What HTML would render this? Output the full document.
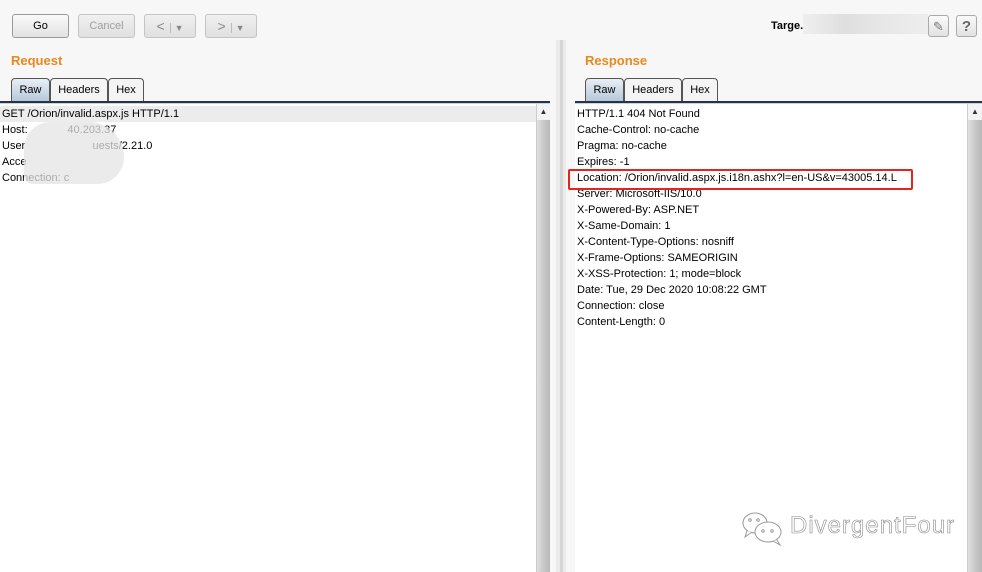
<!DOCTYPE html>
<html><head><style>
*{margin:0;padding:0;box-sizing:border-box}
body{width:982px;height:572px;background:#f7f7f7;font-family:"Liberation Sans",Arial,sans-serif;font-size:11px;color:#000;position:relative;overflow:hidden}
.abs{position:absolute}
.btn{position:absolute;top:14px;height:24px;border:1px solid #9a9a9a;border-radius:3px;background:linear-gradient(#fafafa,#e2e2e2);text-align:center;line-height:22px;font-size:11px}
.dis{border-color:#c4c4c4;color:#a0a0a0;background:linear-gradient(#f0f0f0,#e0e0e0)}
.title{position:absolute;top:53px;color:#e8891d;font-weight:bold;font-size:13px}
.tab{position:absolute;top:78px;height:24px;border:1px solid #555;border-bottom:none;border-radius:4px 4px 0 0;background:#f4f4f4;line-height:22px;text-align:center;font-size:11px}
.tab.sel{background:linear-gradient(#e8eef4,#b3c7da)}
.uline{position:absolute;top:101px;height:3px;border-top:2px solid #2a3342;background:#c5d5e6}
.area{position:absolute;top:104px;bottom:0;background:#fff;padding-top:2px}
.line{height:16px;line-height:16px;padding-left:2px;white-space:nowrap}
.sb{position:absolute;top:104px;bottom:0;width:14px;background:linear-gradient(90deg,#e0e0e0,#c8c8c8 50%,#b8b8b8);border-left:1px solid #ccc}
.sb .up{height:16px;background:#f3f3f3;text-align:center;font-size:8px;line-height:16px;color:#333}
</style></head><body>
<div class="btn" style="left:12px;width:57px">Go</div>
<div class="btn dis" style="left:78px;width:57px">Cancel</div>
<div class="btn dis" style="left:144px;width:52px;font-size:14px;color:#888">&lt;<span style="font-size:9px;border-left:1px solid #bbb;padding-left:4px;margin-left:5px">▼</span></div>
<div class="btn dis" style="left:205px;width:52px;font-size:14px;color:#888">&gt;<span style="font-size:9px;border-left:1px solid #bbb;padding-left:4px;margin-left:5px">▼</span></div>
<div class="abs" style="left:771px;top:20px;font-weight:bold;font-size:11px">Targe.</div>
<div class="abs" style="left:803px;top:14px;width:125px;height:20px;background:linear-gradient(90deg,#eee,#dcdcdc,#e6e6e6,#ececec);opacity:.9"></div>
<div class="btn" style="left:928px;width:21px;border-color:#aaa;font-size:13px;color:#777;top:15px;height:22px">✎</div>
<div class="btn" style="left:956px;width:21px;border-color:#aaa;font-size:15px;color:#666;font-weight:bold;top:15px;height:22px">?</div>

<div class="title" style="left:11px">Request</div>
<div class="tab sel" style="left:11px;width:39px">Raw</div>
<div class="tab" style="left:50px;width:58px">Headers</div>
<div class="tab" style="left:108px;width:36px">Hex</div>
<div class="uline" style="left:0;width:550px"></div>
<div class="area" style="left:0;width:536px">
<div class="line" style="background:#ececec">GET /Orion/invalid.aspx.js HTTP/1.1</div>
<div class="line">Host: &nbsp;&nbsp;&nbsp;&nbsp;&nbsp;&nbsp;&nbsp;&nbsp;&nbsp;&nbsp;&nbsp;&nbsp;40.203.37</div>
<div class="line">User&nbsp;&nbsp;&nbsp;&nbsp;&nbsp;&nbsp;&nbsp;&nbsp;&nbsp;&nbsp;&nbsp;&nbsp;&nbsp;&nbsp;&nbsp;&nbsp;&nbsp;&nbsp;&nbsp;&nbsp;&nbsp;&nbsp;uests/2.21.0</div>
<div class="line">Acce</div>
<div class="line">Connection: c</div>
<div class="abs" style="left:24px;top:18px;width:100px;height:62px;background:#e4e4e4;opacity:.75;border-radius:30px 40px 30px 10px"></div>
</div>
<div class="sb" style="left:536px"><div class="up">▲</div></div>

<div class="abs" style="left:556px;top:40px;width:10px;bottom:0;background:#ebebeb"></div>
<div class="abs" style="left:560px;top:40px;width:3px;bottom:0;background:#d6d6d6"></div>

<div class="title" style="left:585px">Response</div>
<div class="tab sel" style="left:585px;width:39px">Raw</div>
<div class="tab" style="left:624px;width:58px">Headers</div>
<div class="tab" style="left:682px;width:36px">Hex</div>
<div class="uline" style="left:575px;width:407px"></div>
<div class="area" style="left:575px;width:392px">
<div class="line">HTTP/1.1 404 Not Found</div>
<div class="line">Cache-Control: no-cache</div>
<div class="line">Pragma: no-cache</div>
<div class="line">Expires: -1</div>
<div class="line">Location: /Orion/invalid.aspx.js.i18n.ashx?l=en-US&amp;v=43005.14.L</div>
<div class="line">Server: Microsoft-IIS/10.0</div>
<div class="line">X-Powered-By: ASP.NET</div>
<div class="line">X-Same-Domain: 1</div>
<div class="line">X-Content-Type-Options: nosniff</div>
<div class="line">X-Frame-Options: SAMEORIGIN</div>
<div class="line">X-XSS-Protection: 1; mode=block</div>
<div class="line">Date: Tue, 29 Dec 2020 10:08:22 GMT</div>
<div class="line">Connection: close</div>
<div class="line">Content-Length: 0</div>
</div>
<div class="abs" style="left:568px;top:169px;width:345px;height:21px;border:2px solid #e8221c;border-radius:2px"></div>
<div class="sb" style="left:967px;width:15px"><div class="up">▲</div></div>
<svg class="abs" style="left:741px;top:510px" width="46" height="36" viewBox="0 0 46 36" fill="#fff" stroke="#999" stroke-width="1">
<ellipse cx="14" cy="13" rx="12" ry="10"/><path d="M6 21 L4 27 L11 22"/>
<ellipse cx="27" cy="22" rx="13" ry="10"/><path d="M36 30 L39 35 L32 31"/>
<circle cx="9" cy="10" r="1.3"/><circle cx="17" cy="10" r="1.3"/><circle cx="22" cy="21" r="1.2"/><circle cx="31" cy="21" r="1.2"/>
</svg>
<div class="abs" style="left:790px;top:512px;font-size:24px;color:#fff;-webkit-text-stroke:0.6px #8a8a8a;letter-spacing:1px">DivergentFour</div>
</body></html>
